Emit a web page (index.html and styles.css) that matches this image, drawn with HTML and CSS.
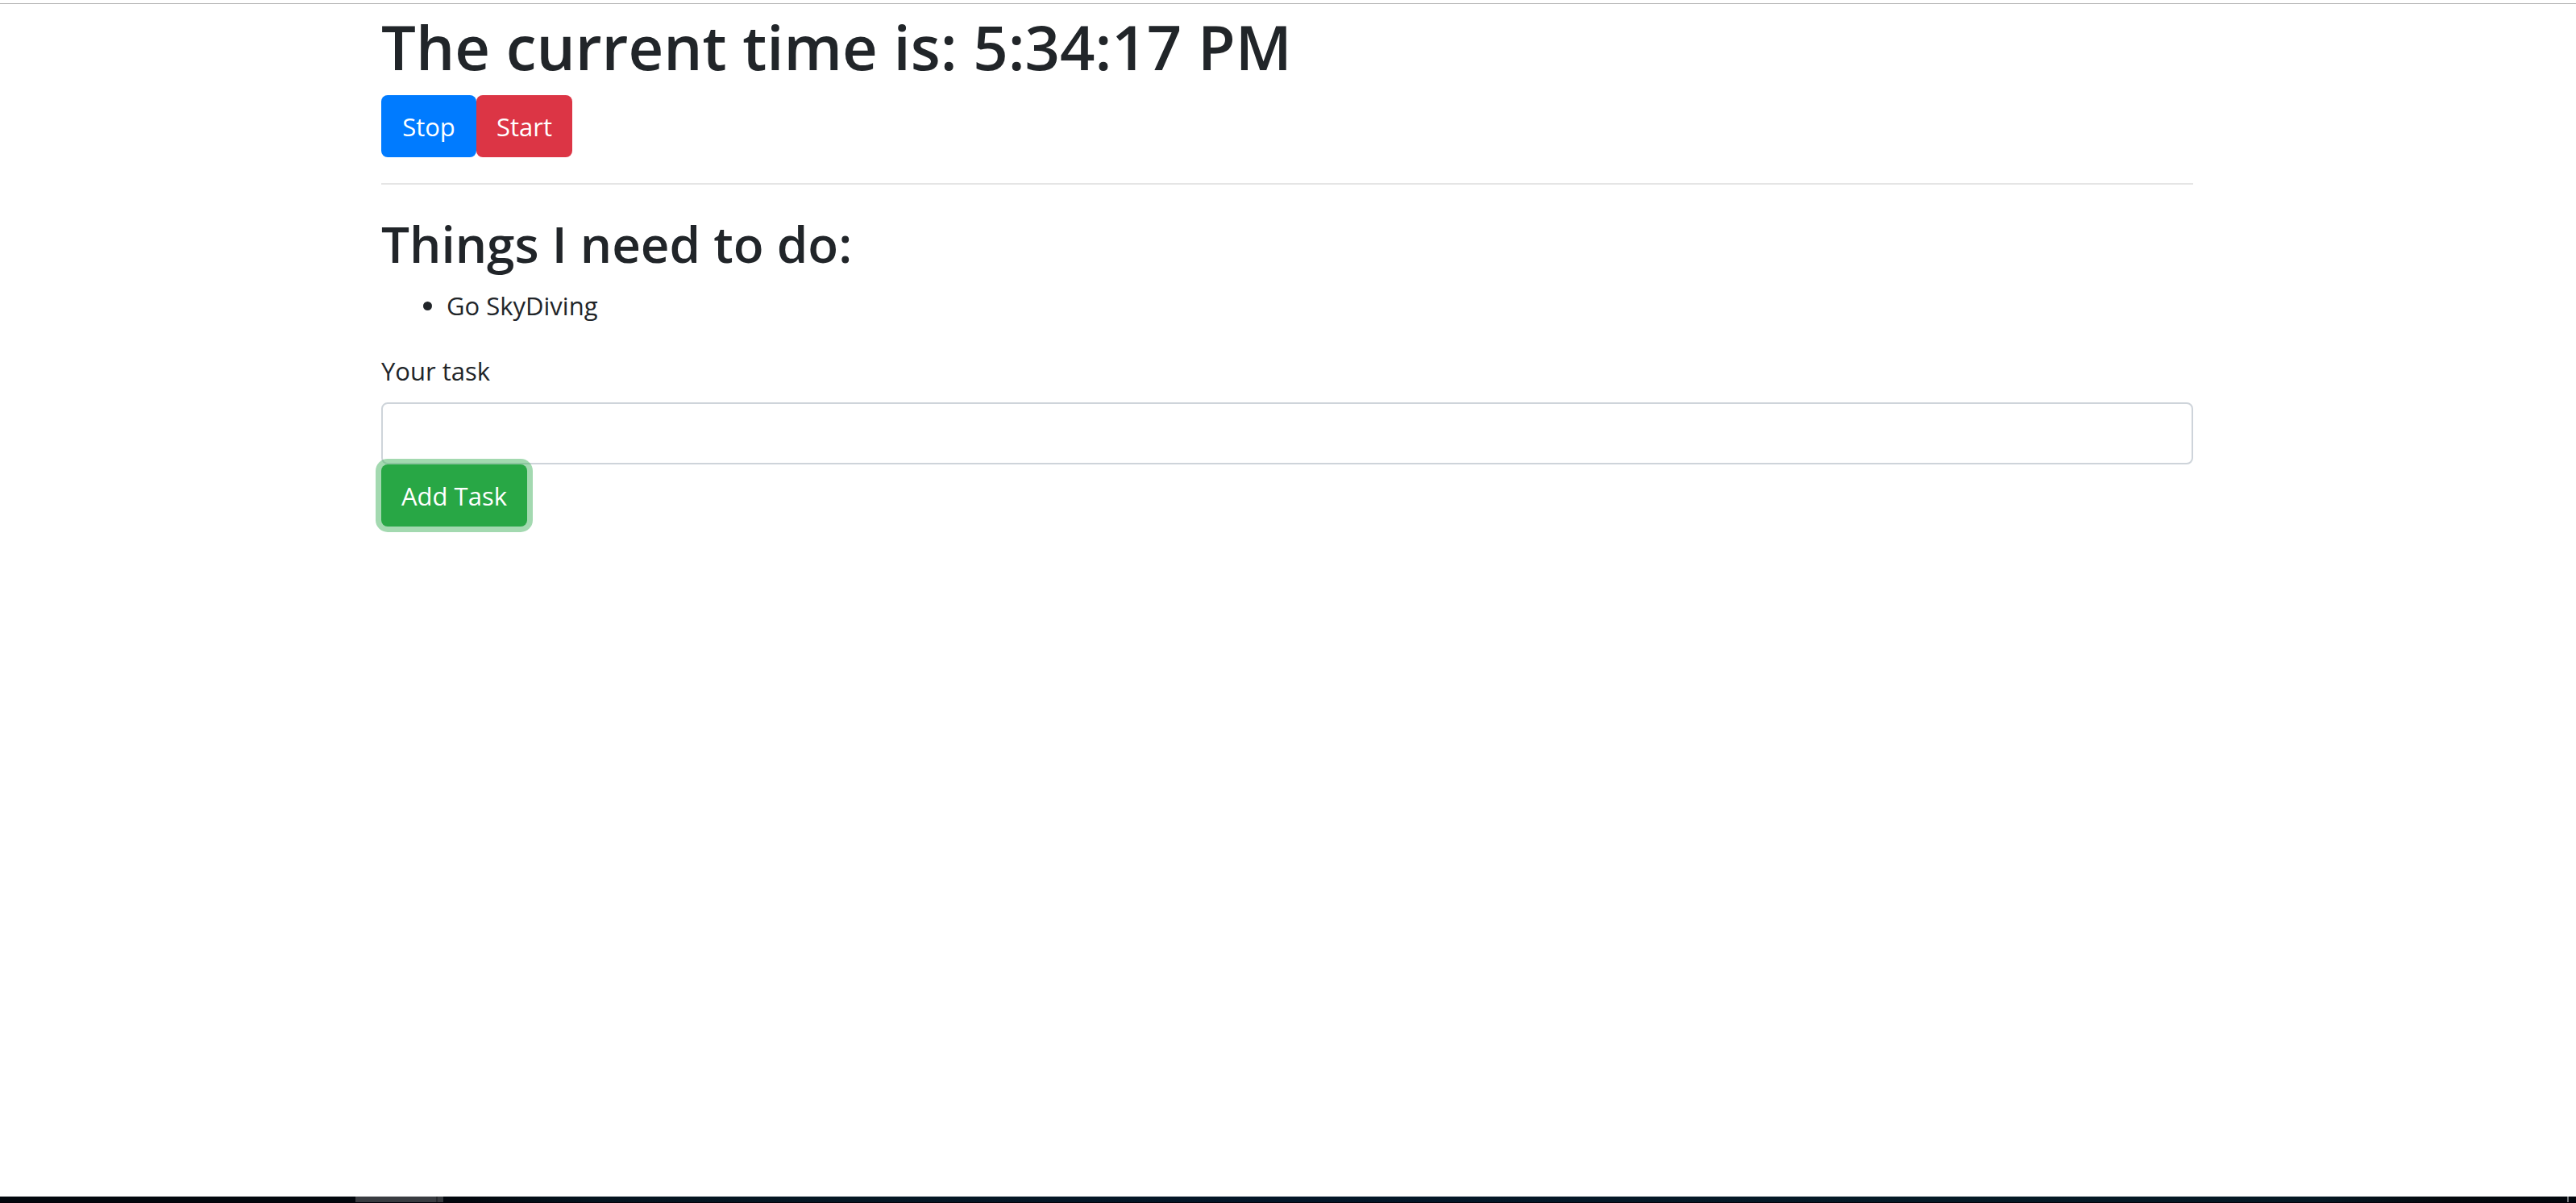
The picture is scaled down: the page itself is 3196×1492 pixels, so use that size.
FILE: index.html
```html
<!DOCTYPE html>
<html lang="en">
<head>
<meta charset="utf-8">
<meta name="viewport" content="width=device-width, initial-scale=1">
<title>Clock and tasks</title>
<link rel="stylesheet" href="styles.css">
</head>
<body>
<main class="container">
  <h1 class="clock">The current time is: 5:34:17 PM</h1>
  <div class="actions">
    <button type="button" class="btn btn-primary">Stop</button>
    <button type="button" class="btn btn-danger">Start</button>
  </div>
  <hr class="divider">
  <h2 class="tasks-title">Things I need to do:</h2>
  <ul class="tasks">
    <li>Go SkyDiving</li>
  </ul>
  <form class="task-form">
    <label class="task-label" for="task">Your task</label>
    <input class="task-input" id="task" type="text">
    <button type="button" class="btn btn-success">Add Task</button>
  </form>
</main>
<footer class="taskbar">
  <span class="taskbar-item"></span>
  <span class="taskbar-item-edge"></span>
  <span class="taskbar-end"></span>
</footer>
</body>
</html>
```
FILE: styles.css
```css
*, *::before, *::after {
  box-sizing: border-box;
}

body {
  display: flex;
  flex-direction: column;
  min-height: 100vh;
  margin: 0;
  padding-top: 4px;
  background: #fff;
  color: #212529;
  font-family: "Open Sans", "Noto Sans", sans-serif;
  font-size: 31px;
  line-height: 49px;
}

.container {
  flex: 1;
  width: 100%;
  max-width: 2250px;
  margin: 0 auto;
  padding-right: 2px;
}

body::before {
  content: "";
  flex: none;
  height: 1px;
  background: #b3b3b3;
}

.clock,
.tasks-title {
  margin: 0 0 16px;
  font-weight: 600;
}

.clock {
  padding-top: 9px;
  font-size: 76px;
  line-height: 88px;
}

.tasks-title {
  padding-top: 5px;
  font-size: 62px;
  line-height: 72px;
}

.actions {
  display: flex;
}

.btn {
  min-width: 118px;
  padding: 15px 25px 13px;
  border: 0;
  border-radius: 8px;
  color: #fff;
  font: inherit;
  cursor: pointer;
}

.btn-primary {
  background: #007bff;
}

.btn-danger {
  background: #dc3545;
}

.btn-success {
  background: #28a745;
  box-shadow: 0 0 0 7px rgba(72, 180, 97, 0.5);
}

.divider {
  height: 2px;
  margin: 32px 0;
  border: 0;
  background: #e5e5e5;
}

.tasks {
  margin: 0 0 32px;
  padding: 1px 0 0 81px;
}

.task-form {
  display: flex;
  flex-direction: column;
  align-items: flex-start;
}

.task-label {
  margin-bottom: 14px;
}

.task-input {
  width: 100%;
  height: 77px;
  padding: 12px 24px;
  border: 2px solid #ced4da;
  border-radius: 8px;
  background: #fff;
  color: #495057;
  font: inherit;
}

.taskbar {
  display: flex;
  flex: none;
  height: 8px;
  padding: 0 9px 0 441px;
  background: linear-gradient(90deg, #02070d 0%, #02070d 18%, #04141f 23%, #051724 33%, #031628 50%, #051a26 75%, #051824 90%, #04090d 95%, #02070d 100%);
  border-bottom: 1px solid #050009;
}

.taskbar-item {
  width: 100px;
  background: #393c41;
}

.taskbar-item-edge {
  width: 9px;
  border-left: 2px solid #25282c;
  background: #36393d;
}

.taskbar-end {
  width: 2px;
  margin-left: auto;
  background: #777b7f;
}
```
